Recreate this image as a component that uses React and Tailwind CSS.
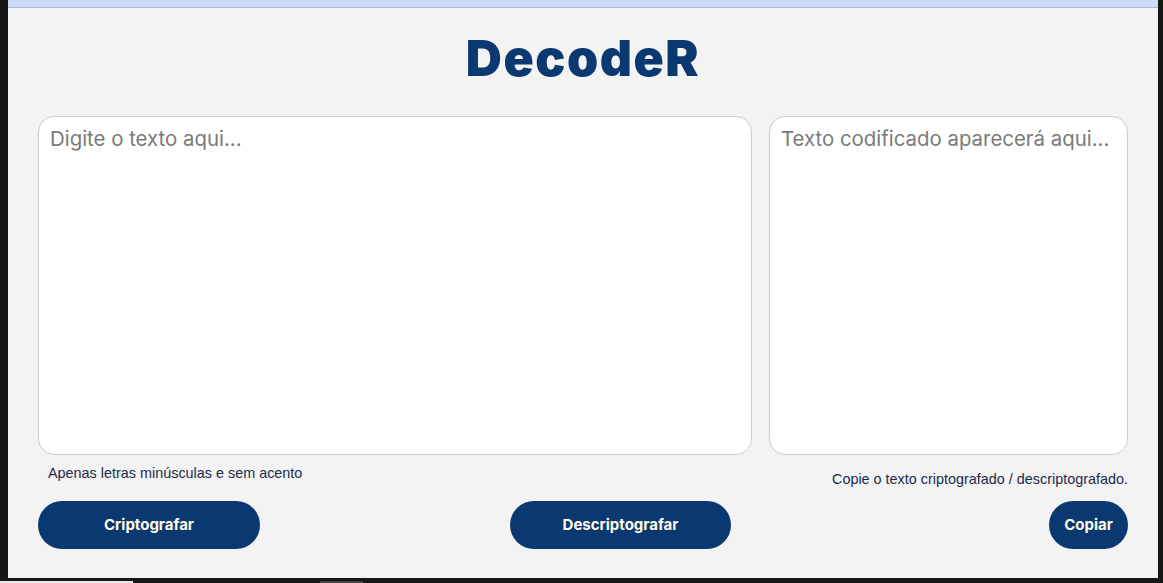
import React from 'react';

const font = { fontFamily: 'Inter, "Open Sans", sans-serif' };

export default function App() {
  return (
    <div className="flex h-[583px] w-full flex-col bg-[#161616] overflow-hidden">
      <div className="flex h-[578px] shrink-0">
        <div className="w-[8px] shrink-0" />
        <div className="flex w-[1150px] shrink-0 flex-col">
          <div className="h-[8px] border-b border-[#a7b9d6] bg-[#c9dbf5]" />
          <main className="flex flex-1 flex-col bg-[#f3f3f3] px-[30px]" style={font}>
            <h1 className="mt-[20px] h-[60px] text-center text-[50px] font-black leading-[60px] tracking-[1.5px] text-[#0a3871]">
              DecodeR
            </h1>
            <div className="mt-[28px] flex gap-[17px]">
              <div className="flex w-[714px] flex-col">
                <textarea
                  className="h-[339px] w-full resize-none rounded-[16px] border border-[#cccccc] bg-white px-[11px] py-[7px] text-[20.4px] text-[#333] outline-none placeholder:text-[#7a7a7a]"
                  placeholder="Digite o texto aqui..."
                />
                <p className="mt-[10px] pl-[10px] font-['Liberation_Sans',Arial,sans-serif] text-[14.4px] leading-[16px] text-[#1d2b4a]">
                  Apenas letras minúsculas e sem acento
                </p>
                <div className="mt-[20px] flex">
                  <button className="h-[48px] w-[222px] rounded-full bg-[#0a3871] text-[15px] font-bold text-[#fffbe9]">
                    Criptografar
                  </button>
                  <button className="ml-[250px] h-[48px] w-[221px] rounded-full bg-[#0a3871] text-[15px] font-bold text-[#fffbe9]">
                    Descriptografar
                  </button>
                </div>
              </div>
              <div className="flex flex-1 flex-col">
                <textarea
                  className="h-[339px] w-full resize-none rounded-[16px] border border-[#cccccc] bg-white px-[11px] py-[7px] text-[20.4px] text-[#333] outline-none placeholder:text-[#7a7a7a]"
                  placeholder="Texto codificado aparecerá aqui..."
                />
                <p className="mt-[16px] text-right font-['Liberation_Sans',Arial,sans-serif] text-[14.4px] leading-[16px] text-[#1d2b4a]">
                  Copie o texto criptografado / descriptografado.
                </p>
                <div className="mt-[14px] flex justify-end">
                  <button className="h-[48px] w-[79px] rounded-full bg-[#0a3871] text-[15px] font-bold text-[#fffbe9]">
                    Copiar
                  </button>
                </div>
              </div>
            </div>
          </main>
        </div>
      </div>
      <div className="flex h-[5px] items-end">
        <div className="h-[2px] w-[133px] bg-[#e8e8e8]" />
        <div className="ml-[187px] h-[2px] w-[43px] bg-[#444]" />
      </div>
    </div>
  );
}
